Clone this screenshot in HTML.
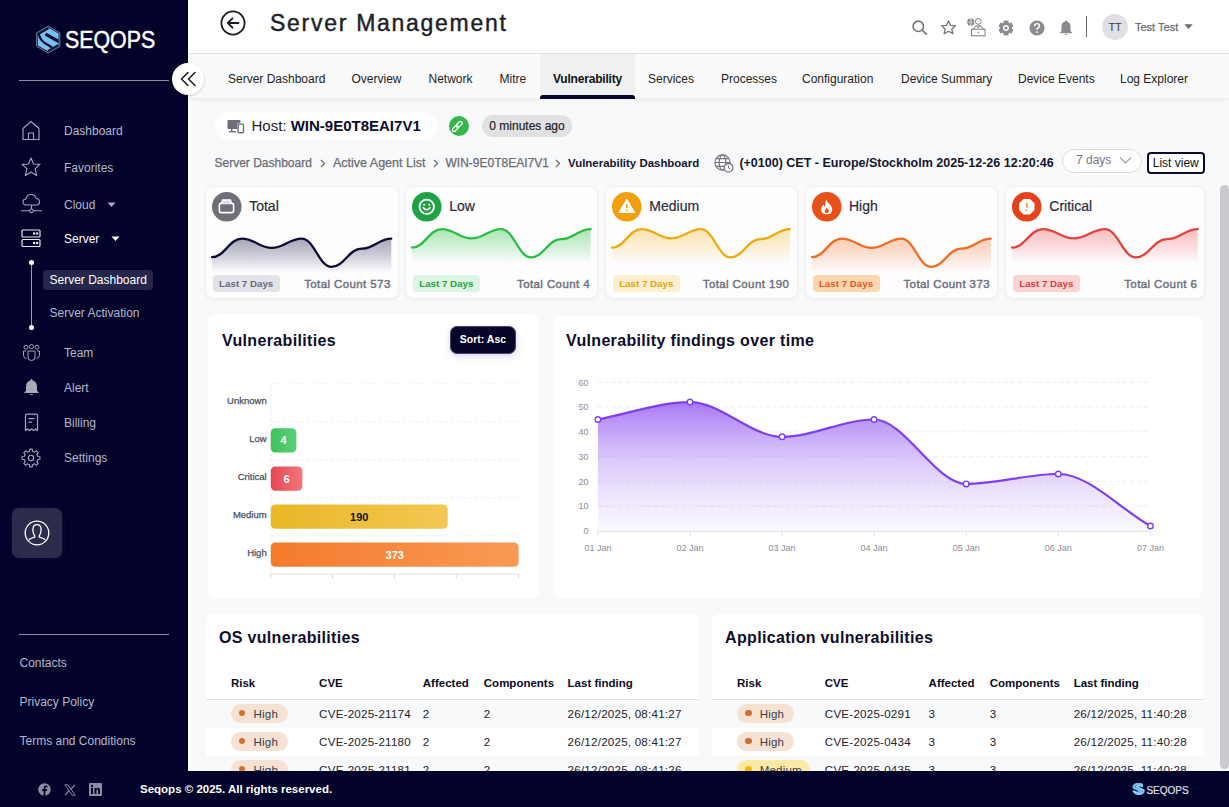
<!DOCTYPE html>
<html><head><meta charset="utf-8">
<style>
*{box-sizing:border-box;margin:0;padding:0}
html,body{width:1229px;height:807px;overflow:hidden;background:#f8f9fb;font-family:"Liberation Sans",sans-serif;}
.abs{position:absolute}
#sb{position:absolute;left:0;top:0;width:188px;height:807px;background:#02022a}
.nav{position:absolute;left:64px;font-size:12px;color:#b4b8cc;line-height:14px;white-space:nowrap}
.ico{position:absolute}
#hdr{position:absolute;left:188px;top:0;width:1041px;height:54px;background:#fff;border-bottom:1px solid #dedfe3}
#tabs{position:absolute;left:188px;top:54px;width:1041px;height:44px;background:#fafafb;box-shadow:0 2px 4px rgba(0,0,0,0.06)}
.tab{position:absolute;top:0;height:44px;line-height:50px;font-size:12px;color:#222;white-space:nowrap}
#foot{position:absolute;left:0;top:771px;width:1229px;height:36px;background:#02022a}
.card{position:absolute;top:185.5px;height:113.8px;background:#fdfdfe;border-radius:8px;border:1px solid #eef0f3;box-shadow:0 1px 3px rgba(0,0,0,0.05)}
.panel{position:absolute;background:#fff;border-radius:7px}
</style></head><body>

<!-- main content area -->
<div class="abs" style="left:188px;top:98px;width:1041px;height:673px;background:#f8f9fb"></div>

<!-- SIDEBAR -->

<div id="sb">
  <!-- logo -->
  <svg class="ico" style="left:34px;top:25px" width="29" height="30" viewBox="34 25 29 30">
    <defs><clipPath id="hx"><polygon points="48.2,27.6 58.6,33.6 58.6,45.6 48.2,51.6 37.8,45.6 37.8,33.6"/></clipPath></defs>
    <polygon points="48.2,26.2 59.8,32.9 59.8,46.3 48.2,53 36.6,46.3 36.6,32.9" fill="#0a0a30" stroke="#8a8fa8" stroke-width="0.9"/>
    <g clip-path="url(#hx)">
      <rect x="34" y="25" width="29" height="30" fill="#78c0f2"/>
      <path d="M37.8,33.6 L48.2,27.6" stroke="#0a0a30" stroke-width="3.4"/>
      <path d="M38.5,33 Q39.5,39 44,42.5 L52,47.5" fill="none" stroke="#0a0a30" stroke-width="2.2"/>
      <path d="M45.5,34.2 L60,42.2" fill="none" stroke="#0a0a30" stroke-width="3.2"/>
      <path d="M48.2,51.6 L58.6,45.6" stroke="#0a0a30" stroke-width="3.4"/>
    </g>
  </svg>
  <div class="abs" style="left:65px;top:27px;font-size:24px;line-height:26px;color:#fff;transform:scaleX(0.89);transform-origin:left;-webkit-text-stroke:0.5px #fff">SEQOPS</div>
  <div class="abs" style="left:19px;top:80px;width:150px;height:1px;background:#8c8ea6"></div>
  <!-- collapse button -->

  <!-- nav icons -->
  <svg class="ico" style="left:21px;top:120px" width="20" height="21" viewBox="0 0 20 21" fill="none" stroke="#a2a5b8" stroke-width="1.15" stroke-linejoin="round">
    <path d="M2,8.5 L10,1.5 L18,8.5 L18,19.5 L2,19.5 Z"/><path d="M7.5,19.5 L7.5,13 L12.5,13 L12.5,19.5"/>
  </svg>
  <div class="nav" style="top:124px">Dashboard</div>

  <svg class="ico" style="left:21px;top:157px" width="20" height="20" viewBox="0 0 20 20" fill="none" stroke="#a2a5b8" stroke-width="1.15" stroke-linejoin="round">
    <path d="M10,1 L12.6,7 L19,7.4 L14.1,11.6 L15.6,18.5 L10,14.9 L4.4,18.5 L5.9,11.6 L1,7.4 L7.4,7 Z"/>
  </svg>
  <div class="nav" style="top:161px">Favorites</div>

  <svg class="ico" style="left:20px;top:193px" width="23" height="21" viewBox="0 0 23 21" fill="none" stroke="#a2a5b8" stroke-width="1.1">
    <path d="M6.5,12 Q3,12 3,8.8 Q3,6 6,6 Q6.5,1.5 11,1.5 Q15.5,1.5 16.2,5.5 Q19.5,5.5 19.5,8.8 Q19.5,12 16.5,12 Z"/>
    <path d="M11.5,12 L11.5,16"/><circle cx="11.5" cy="17.8" r="1.8"/><path d="M1,17.8 L9.7,17.8 M13.3,17.8 L22,17.8"/>
  </svg>
  <div class="nav" style="top:198px">Cloud</div>
  <svg class="ico" style="left:107px;top:202px" width="9" height="6" viewBox="0 0 9 6"><path d="M0.5,0.5 L8.5,0.5 L4.5,5 Z" fill="#a9adc2"/></svg>

  <svg class="ico" style="left:21px;top:229px" width="20" height="19" viewBox="0 0 20 19" fill="none" stroke="#e8e9f0" stroke-width="1.2">
    <rect x="1" y="1" width="18" height="7" rx="1"/><rect x="1" y="10.5" width="18" height="7" rx="1"/>
    <rect x="12" y="3.4" width="2.2" height="2.2" fill="#e8e9f0" stroke="none"/><rect x="15" y="3.4" width="2.2" height="2.2" fill="#e8e9f0" stroke="none"/>
    <rect x="12" y="12.9" width="2.2" height="2.2" fill="#e8e9f0" stroke="none"/><rect x="15" y="12.9" width="2.2" height="2.2" fill="#e8e9f0" stroke="none"/>
  </svg>
  <div class="nav" style="top:232px;color:#fff">Server</div>
  <svg class="ico" style="left:111px;top:236px" width="9" height="6" viewBox="0 0 9 6"><path d="M0.5,0.5 L8.5,0.5 L4.5,5 Z" fill="#fff"/></svg>

  <!-- sub menu -->
  <div class="abs" style="left:30.5px;top:263px;width:1.3px;height:64px;background:#9a9cb0"></div>
  <div class="abs" style="left:28.5px;top:260px;width:5px;height:5px;border-radius:50%;background:#fff"></div>
  <div class="abs" style="left:28.5px;top:324.5px;width:5px;height:5px;border-radius:50%;background:#fff"></div>
  <div class="abs" style="left:43px;top:269.5px;width:110px;height:20px;border-radius:4px;background:#24264a"></div>
  <div class="nav" style="left:49.5px;top:273px;color:#fff">Server Dashboard</div>
  <div class="nav" style="left:49.5px;top:306px">Server Activation</div>

  <svg class="ico" style="left:22px;top:344px" width="19" height="18" viewBox="0 0 19 18" fill="none" stroke="#a2a5b8" stroke-width="1">
    <circle cx="4" cy="3.2" r="2"/><circle cx="9.5" cy="2.6" r="2.1"/><circle cx="15" cy="3.2" r="2"/>
    <path d="M6,7 L13,7 L13,13 Q13,16.5 9.5,16.5 Q6,16.5 6,13 Z"/>
    <path d="M4,7 L1.5,7 L1.5,11.5 Q1.5,14 4.5,14.5"/><path d="M15,7 L17.5,7 L17.5,11.5 Q17.5,14 14.5,14.5"/>
  </svg>
  <div class="nav" style="top:346px">Team</div>

  <svg class="ico" style="left:23px;top:378px" width="17" height="18" viewBox="0 0 17 18">
    <path d="M8.5,1 Q9.5,1 9.7,2.5 Q14,3.5 14,9 L14,12.5 L16,15 L1,15 L3,12.5 L3,9 Q3,3.5 7.3,2.5 Q7.5,1 8.5,1 Z" fill="#a8aab6"/>
    <path d="M6.5,16 Q8.5,18 10.5,16 Z" fill="#a8aab6"/>
  </svg>
  <div class="nav" style="top:381px">Alert</div>

  <svg class="ico" style="left:24px;top:413px" width="15" height="19" viewBox="0 0 15 19" fill="none" stroke="#a2a5b8" stroke-width="1.25">
    <path d="M1.5,17.5 L1.5,2.5 Q1.5,1 3,1 L12,1 Q13.5,1 13.5,2.5 L13.5,17.5 L11.5,16 L9.5,17.5 L7.5,16 L5.5,17.5 L3.5,16 Z" stroke-linejoin="round"/>
    <path d="M4.5,5.5 L10.5,5.5 M4.5,9 L8,9"/>
  </svg>
  <div class="nav" style="top:416px">Billing</div>

  <svg class="ico" style="left:21px;top:448px" width="20" height="20" viewBox="0 0 20 20" fill="none" stroke="#a2a5b8" stroke-width="1.1" stroke-linejoin="round">
    <path d="M16.73,8.49 L18.91,8.73 L18.91,11.27 L16.73,11.51 L15.83,13.70 L17.20,15.40 L15.40,17.20 L13.70,15.83 L11.51,16.73 L11.27,18.91 L8.73,18.91 L8.49,16.73 L6.30,15.83 L4.60,17.20 L2.80,15.40 L4.17,13.70 L3.27,11.51 L1.09,11.27 L1.09,8.73 L3.27,8.49 L4.17,6.30 L2.80,4.60 L4.60,2.80 L6.30,4.17 L8.49,3.27 L8.73,1.09 L11.27,1.09 L11.51,3.27 L13.70,4.17 L15.40,2.80 L17.20,4.60 L15.83,6.30 Z"/>
    <circle cx="10" cy="10" r="2.7"/>
  </svg>
  <div class="nav" style="top:451px">Settings</div>

  <!-- avatar -->
  <div class="abs" style="left:12px;top:508px;width:50px;height:50px;border-radius:7px;background:#2b2c4b;box-shadow:0 0 6px rgba(60,50,110,0.3)"></div>
  <svg class="ico" style="left:24px;top:520px" width="26" height="26" viewBox="0 0 26 26" fill="none" stroke="#fff" stroke-width="1.3">
    <circle cx="13" cy="13" r="11.8"/>
    <path d="M4.8,19.6 Q7,18.3 10.6,17.2 Q11,16.6 10.6,15.5 Q8.8,13 8.9,9.4 Q9.1,4.6 13,4.6 Q16.9,4.6 17.1,9.4 Q17.2,13 15.4,15.5 Q15,16.6 15.4,17.2 Q19,18.3 21.2,19.6"/>
  </svg>

  <div class="abs" style="left:19px;top:634px;width:150px;height:1px;background:#8c8ea6"></div>
  <div class="nav" style="left:19.5px;top:656px">Contacts</div>
  <div class="nav" style="left:19.5px;top:695px">Privacy Policy</div>
  <div class="nav" style="left:19.5px;top:734px">Terms and Conditions</div>
</div>



<div class="abs" style="left:188px;top:98px;width:5px;height:673px;background:linear-gradient(to right,#ffffff 40%,#f8f9fb)"></div>
<!-- HOST ROW -->
<div class="abs" style="left:214.5px;top:111.5px;width:222px;height:28.5px;border-radius:15px;background:#fff"></div>
<svg class="ico" style="left:227px;top:119px" width="18" height="15" viewBox="0 0 18 15">
  <rect x="0.5" y="1" width="13" height="9" rx="1" fill="#6e6e78"/>
  <rect x="4" y="10" width="1.5" height="2.2" fill="#6e6e78"/><rect x="2" y="12" width="7" height="1.4" fill="#6e6e78"/>
  <rect x="10.3" y="4.3" width="7" height="10.2" rx="1.3" fill="#fff"/>
  <rect x="11.1" y="5.1" width="5.4" height="8.6" rx="1" fill="none" stroke="#6e6e78" stroke-width="1.4"/>
</svg>
<div class="abs" style="left:251.5px;top:117px;font-size:15px;line-height:17px;color:#1d1d33;white-space:nowrap">Host: <b style="color:#0b0b2c">WIN-9E0T8EAI7V1</b></div>
<div class="abs" style="left:449px;top:115.5px;width:20px;height:20px;border-radius:50%;background:#33b84a"></div>
<svg class="ico" style="left:452px;top:118.5px" width="14" height="14" viewBox="0 0 14 14" fill="none" stroke="#fff" stroke-width="1.3">
  <rect x="2.6" y="-1.7" width="7" height="3.4" rx="1.7" transform="translate(3.2,9.6) rotate(-45) translate(-6.1,0)"/>
  <rect x="2.6" y="-1.7" width="7" height="3.4" rx="1.7" transform="translate(7.2,5.4) rotate(-45) translate(-6.1,0)"/>
</svg>
<div class="abs" style="left:482px;top:115px;width:90px;height:22px;border-radius:11px;background:#e1e1e4;font-size:12px;line-height:22px;color:#222;-webkit-text-stroke:0.2px #222;text-align:center;white-space:nowrap">0 minutes ago</div>

<!-- BREADCRUMB -->
<div class="abs" style="left:214.5px;top:156px;font-size:12px;line-height:15px;color:#6b6b73;-webkit-text-stroke:0.25px #6b6b73;white-space:nowrap">Server Dashboard</div>
<svg class="ico" style="left:319.5px;top:159px" width="6" height="9" viewBox="0 0 6 9"><path d="M1,1 L4.5,4.5 L1,8" fill="none" stroke="#6b6b73" stroke-width="1.2"/></svg>
<div class="abs" style="left:333px;top:156px;font-size:12.5px;line-height:15px;color:#6b6b73;-webkit-text-stroke:0.25px #6b6b73;white-space:nowrap">Active Agent List</div>
<svg class="ico" style="left:432.5px;top:159px" width="6" height="9" viewBox="0 0 6 9"><path d="M1,1 L4.5,4.5 L1,8" fill="none" stroke="#6b6b73" stroke-width="1.2"/></svg>
<div class="abs" style="left:445.5px;top:156px;font-size:12px;line-height:15px;color:#6b6b73;-webkit-text-stroke:0.25px #6b6b73;white-space:nowrap">WIN-9E0T8EAI7V1</div>
<svg class="ico" style="left:555px;top:159px" width="6" height="9" viewBox="0 0 6 9"><path d="M1,1 L4.5,4.5 L1,8" fill="none" stroke="#6b6b73" stroke-width="1.2"/></svg>
<div class="abs" style="left:568px;top:156px;font-size:11.45px;line-height:15px;font-weight:bold;color:#15152e;white-space:nowrap">Vulnerability Dashboard</div>

<svg class="ico" style="left:714px;top:154px" width="20" height="19" viewBox="0 0 20 19" fill="none" stroke="#75757d" stroke-width="1.2">
  <circle cx="8.5" cy="8.5" r="7.6"/><ellipse cx="8.5" cy="8.5" rx="3.3" ry="7.6"/><path d="M1,8.5 L16,8.5 M2.2,4.6 L14.8,4.6 M2.2,12.4 L11,12.4"/>
  <circle cx="14.5" cy="13.8" r="4.3" fill="#f8f9fb" stroke-width="1.3"/><path d="M14.5,11.6 L14.5,14 L16,14.8" stroke-width="1"/>
</svg>
<div class="abs" style="left:739.4px;top:155px;font-size:12.5px;line-height:16px;font-weight:bold;color:#15152e;white-space:nowrap">(+0100) CET - Europe/Stockholm 2025-12-26 12:20:46</div>
<div class="abs" style="left:1061.5px;top:148.5px;width:80px;height:24.5px;border-radius:13px;background:#fff;border:1px solid #dcdce0"></div>
<div class="abs" style="left:1076px;top:153px;font-size:12px;line-height:15px;color:#77777f;white-space:nowrap">7 days</div>
<svg class="ico" style="left:1119px;top:156px" width="13" height="9" viewBox="0 0 13 9"><path d="M1,1.5 L6.5,7 L12,1.5" fill="none" stroke="#a8a8ae" stroke-width="1.3"/></svg>
<div class="abs" style="left:1147px;top:152px;width:57.5px;height:21.5px;border-radius:4px;border:2px solid #0b0b30;background:#fff;font-size:12px;line-height:18px;color:#111;text-align:center;white-space:nowrap">List view</div>

<!-- CARDS -->
<div class="card" style="left:204.7px;width:194.3px"></div>
<svg class="ico" style="left:212.2px;top:192.3px" width="29.5" height="29.5" viewBox="0 0 29.5 29.5"><circle cx="14.75" cy="14.75" r="14.75" fill="#6e6f79"/><rect x="7.5" y="11.5" width="14" height="9" rx="1.5" fill="none" stroke="#fff" stroke-width="1.8"/><path d="M9.5,11.5 L10.5,8 L18.5,8 L19.5,11.5" fill="#d9d9de" stroke="#fff" stroke-width="1.4"/><rect x="8.5" y="12.5" width="12" height="7" fill="#6e6f79"/></svg>
<div class="abs" style="left:249.2px;top:198px;font-size:14px;line-height:17px;color:#2b2b3b;-webkit-text-stroke:0.2px #2b2b3b;white-space:nowrap">Total</div>
<svg class="ico" style="left:212.1px;top:215px;overflow:visible" width="179.3" height="65" viewBox="0 0 179.3 65"><defs><linearGradient id="g0" gradientUnits="userSpaceOnUse" x1="0" y1="23.6" x2="0" y2="57.9"><stop offset="0" stop-color="#3a3b60" stop-opacity="0.45"/><stop offset="0.55" stop-color="#3a3b60" stop-opacity="0.22"/><stop offset="1" stop-color="#3a3b60" stop-opacity="0"/></linearGradient></defs><path d="M0.0,42.1 C12.6,42.1 17.3,23.6 29.9,23.6 C42.4,23.6 47.2,32.9 59.8,32.9 C72.3,32.9 77.1,23.6 89.7,23.6 C102.2,23.6 107.0,51.9 119.5,51.9 C132.1,51.9 136.9,33.7 149.4,33.7 C162.0,33.7 166.7,23.6 179.3,23.6 L179.3,65 L0,65 Z" fill="url(#g0)"/><path d="M0.0,42.1 C12.6,42.1 17.3,23.6 29.9,23.6 C42.4,23.6 47.2,32.9 59.8,32.9 C72.3,32.9 77.1,23.6 89.7,23.6 C102.2,23.6 107.0,51.9 119.5,51.9 C132.1,51.9 136.9,33.7 149.4,33.7 C162.0,33.7 166.7,23.6 179.3,23.6" fill="none" stroke="#0b0b33" stroke-width="2.3" stroke-linecap="round"/></svg>
<div class="abs" style="left:212.7px;top:275px;width:67px;height:16.6px;border-radius:4px;background:#e2e3e8;color:#656a78;font-size:9.75px;font-weight:bold;line-height:17px;text-align:center;white-space:nowrap">Last 7 Days</div>
<div class="abs" style="left:204.7px;width:186.0px;top:277.3px;text-align:right;font-size:11.5px;line-height:14px;letter-spacing:0.4px;color:#6a6d7d;-webkit-text-stroke:0.4px #6a6d7d;white-space:nowrap">Total Count 573</div>
<div class="card" style="left:404.8px;width:193.5px"></div>
<svg class="ico" style="left:412.3px;top:192.3px" width="29.5" height="29.5" viewBox="0 0 29.5 29.5"><circle cx="14.75" cy="14.75" r="14.75" fill="#1fa244"/><circle cx="14.75" cy="14.75" r="7.2" fill="none" stroke="#fff" stroke-width="1.8"/><circle cx="12.2" cy="12.8" r="1.05" fill="#fff"/><circle cx="17.3" cy="12.8" r="1.05" fill="#fff"/><path d="M11.4,15.8 Q14.75,19.6 18.1,15.8" fill="none" stroke="#fff" stroke-width="1.6" stroke-linecap="round"/></svg>
<div class="abs" style="left:449.3px;top:198px;font-size:14px;line-height:17px;color:#2b2b3b;-webkit-text-stroke:0.2px #2b2b3b;white-space:nowrap">Low</div>
<svg class="ico" style="left:412.2px;top:215px;overflow:visible" width="178.5" height="65" viewBox="0 0 178.5 65"><defs><linearGradient id="g1" gradientUnits="userSpaceOnUse" x1="0" y1="14.1" x2="0" y2="48.4"><stop offset="0" stop-color="#45c95d" stop-opacity="0.45"/><stop offset="0.55" stop-color="#45c95d" stop-opacity="0.22"/><stop offset="1" stop-color="#45c95d" stop-opacity="0"/></linearGradient></defs><path d="M0.0,32.6 C12.5,32.6 17.3,14.1 29.8,14.1 C42.2,14.1 47.0,23.4 59.5,23.4 C72.0,23.4 76.8,14.1 89.2,14.1 C101.7,14.1 106.5,42.4 119.0,42.4 C131.5,42.4 136.3,24.2 148.7,24.2 C161.2,24.2 166.0,14.1 178.5,14.1 L178.5,65 L0,65 Z" fill="url(#g1)"/><path d="M0.0,32.6 C12.5,32.6 17.3,14.1 29.8,14.1 C42.2,14.1 47.0,23.4 59.5,23.4 C72.0,23.4 76.8,14.1 89.2,14.1 C101.7,14.1 106.5,42.4 119.0,42.4 C131.5,42.4 136.3,24.2 148.7,24.2 C161.2,24.2 166.0,14.1 178.5,14.1" fill="none" stroke="#2dbd45" stroke-width="2.3" stroke-linecap="round"/></svg>
<div class="abs" style="left:412.8px;top:275px;width:67px;height:16.6px;border-radius:4px;background:#dbf5e2;color:#22a346;font-size:9.75px;font-weight:bold;line-height:17px;text-align:center;white-space:nowrap">Last 7 Days</div>
<div class="abs" style="left:404.8px;width:185.2px;top:277.3px;text-align:right;font-size:11.5px;line-height:14px;letter-spacing:0.4px;color:#6a6d7d;-webkit-text-stroke:0.4px #6a6d7d;white-space:nowrap">Total Count 4</div>
<div class="card" style="left:604.8px;width:192.8px"></div>
<svg class="ico" style="left:612.3px;top:192.3px" width="29.5" height="29.5" viewBox="0 0 29.5 29.5"><circle cx="14.75" cy="14.75" r="14.75" fill="#f1a00c"/><path d="M14.75,7.5 L22.5,20.5 L7,20.5 Z" fill="#fff" stroke="#fff" stroke-width="1.2" stroke-linejoin="round"/><path d="M14.75,12 L14.75,16.2" stroke="#f1a00c" stroke-width="1.6"/><circle cx="14.75" cy="18.2" r="0.85" fill="#f1a00c"/></svg>
<div class="abs" style="left:649.3px;top:198px;font-size:14px;line-height:17px;color:#2b2b3b;-webkit-text-stroke:0.2px #2b2b3b;white-space:nowrap">Medium</div>
<svg class="ico" style="left:612.2px;top:215px;overflow:visible" width="177.8" height="65" viewBox="0 0 177.8 65"><defs><linearGradient id="g2" gradientUnits="userSpaceOnUse" x1="0" y1="14.1" x2="0" y2="48.4"><stop offset="0" stop-color="#f4c04a" stop-opacity="0.45"/><stop offset="0.55" stop-color="#f4c04a" stop-opacity="0.22"/><stop offset="1" stop-color="#f4c04a" stop-opacity="0"/></linearGradient></defs><path d="M0.0,32.6 C12.4,32.6 17.2,14.1 29.6,14.1 C42.1,14.1 46.8,23.4 59.3,23.4 C71.7,23.4 76.5,14.1 88.9,14.1 C101.3,14.1 106.1,42.4 118.5,42.4 C131.0,42.4 135.7,24.2 148.2,24.2 C160.6,24.2 165.4,14.1 177.8,14.1 L177.8,65 L0,65 Z" fill="url(#g2)"/><path d="M0.0,32.6 C12.4,32.6 17.2,14.1 29.6,14.1 C42.1,14.1 46.8,23.4 59.3,23.4 C71.7,23.4 76.5,14.1 88.9,14.1 C101.3,14.1 106.1,42.4 118.5,42.4 C131.0,42.4 135.7,24.2 148.2,24.2 C160.6,24.2 165.4,14.1 177.8,14.1" fill="none" stroke="#efaa0c" stroke-width="2.3" stroke-linecap="round"/></svg>
<div class="abs" style="left:612.8px;top:275px;width:67px;height:16.6px;border-radius:4px;background:#fcefd0;color:#e8a30a;font-size:9.75px;font-weight:bold;line-height:17px;text-align:center;white-space:nowrap">Last 7 Days</div>
<div class="abs" style="left:604.8px;width:184.5px;top:277.3px;text-align:right;font-size:11.5px;line-height:14px;letter-spacing:0.4px;color:#6a6d7d;-webkit-text-stroke:0.4px #6a6d7d;white-space:nowrap">Total Count 190</div>
<div class="card" style="left:804.5px;width:193.8px"></div>
<svg class="ico" style="left:812.0px;top:192.3px" width="29.5" height="29.5" viewBox="0 0 29.5 29.5"><circle cx="14.75" cy="14.75" r="14.75" fill="#e8501a"/><path d="M14.2,7.3 Q15,10 17,11.5 Q20.3,14 20.3,17.2 Q20.3,22.3 14.75,22.3 Q9.2,22.3 9.2,17.5 Q9.2,14.5 11.5,12.3 Q12,14.5 13.3,14.7 Q12.8,10.5 14.2,7.3 Z" fill="#fff"/><path d="M14.6,15.5 Q15.2,16.8 16.2,17.6 Q17.3,18.6 16.8,19.8 Q16.2,21 14.75,21 Q13.1,21 12.7,19.7 Q12.3,18.3 13.6,17.2 Q14.4,16.5 14.6,15.5 Z" fill="#e8501a"/></svg>
<div class="abs" style="left:849.0px;top:198px;font-size:14px;line-height:17px;color:#2b2b3b;-webkit-text-stroke:0.2px #2b2b3b;white-space:nowrap">High</div>
<svg class="ico" style="left:811.9px;top:215px;overflow:visible" width="178.8" height="65" viewBox="0 0 178.8 65"><defs><linearGradient id="g3" gradientUnits="userSpaceOnUse" x1="0" y1="23.6" x2="0" y2="57.9"><stop offset="0" stop-color="#f5915a" stop-opacity="0.45"/><stop offset="0.55" stop-color="#f5915a" stop-opacity="0.22"/><stop offset="1" stop-color="#f5915a" stop-opacity="0"/></linearGradient></defs><path d="M0.0,42.1 C12.5,42.1 17.3,23.6 29.8,23.6 C42.3,23.6 47.1,32.9 59.6,32.9 C72.1,32.9 76.9,23.6 89.4,23.6 C101.9,23.6 106.7,51.9 119.2,51.9 C131.7,51.9 136.5,33.7 149.0,33.7 C161.5,33.7 166.3,23.6 178.8,23.6 L178.8,65 L0,65 Z" fill="url(#g3)"/><path d="M0.0,42.1 C12.5,42.1 17.3,23.6 29.8,23.6 C42.3,23.6 47.1,32.9 59.6,32.9 C72.1,32.9 76.9,23.6 89.4,23.6 C101.9,23.6 106.7,51.9 119.2,51.9 C131.7,51.9 136.5,33.7 149.0,33.7 C161.5,33.7 166.3,23.6 178.8,23.6" fill="none" stroke="#f26b22" stroke-width="2.3" stroke-linecap="round"/></svg>
<div class="abs" style="left:812.5px;top:275px;width:67px;height:16.6px;border-radius:4px;background:#fdd6b0;color:#e8561a;font-size:9.75px;font-weight:bold;line-height:17px;text-align:center;white-space:nowrap">Last 7 Days</div>
<div class="abs" style="left:804.5px;width:185.5px;top:277.3px;text-align:right;font-size:11.5px;line-height:14px;letter-spacing:0.4px;color:#6a6d7d;-webkit-text-stroke:0.4px #6a6d7d;white-space:nowrap">Total Count 373</div>
<div class="card" style="left:1004.8px;width:200.7px"></div>
<svg class="ico" style="left:1012.3px;top:192.3px" width="29.5" height="29.5" viewBox="0 0 29.5 29.5"><circle cx="14.75" cy="14.75" r="14.75" fill="#e5421b"/><path d="M11.5,7 L18,7 L22.5,11.5 L22.5,18 L18,22.5 L11.5,22.5 L7,18 L7,11.5 Z" fill="#fff"/><rect x="14" y="10.8" width="1.5" height="5.2" fill="#f0935a"/><rect x="14" y="17.3" width="1.5" height="1.6" fill="#f0935a"/></svg>
<div class="abs" style="left:1049.3px;top:198px;font-size:14px;line-height:17px;color:#2b2b3b;-webkit-text-stroke:0.2px #2b2b3b;white-space:nowrap">Critical</div>
<svg class="ico" style="left:1012.2px;top:215px;overflow:visible" width="185.7" height="65" viewBox="0 0 185.7 65"><defs><linearGradient id="g4" gradientUnits="userSpaceOnUse" x1="0" y1="14.1" x2="0" y2="48.4"><stop offset="0" stop-color="#f07070" stop-opacity="0.45"/><stop offset="0.55" stop-color="#f07070" stop-opacity="0.22"/><stop offset="1" stop-color="#f07070" stop-opacity="0"/></linearGradient></defs><path d="M0.0,32.6 C13.0,32.6 18.0,14.1 30.9,14.1 C43.9,14.1 48.9,23.4 61.9,23.4 C74.9,23.4 79.9,14.1 92.9,14.1 C105.8,14.1 110.8,42.4 123.8,42.4 C136.8,42.4 141.8,24.2 154.8,24.2 C167.7,24.2 172.7,14.1 185.7,14.1 L185.7,65 L0,65 Z" fill="url(#g4)"/><path d="M0.0,32.6 C13.0,32.6 18.0,14.1 30.9,14.1 C43.9,14.1 48.9,23.4 61.9,23.4 C74.9,23.4 79.9,14.1 92.9,14.1 C105.8,14.1 110.8,42.4 123.8,42.4 C136.8,42.4 141.8,24.2 154.8,24.2 C167.7,24.2 172.7,14.1 185.7,14.1" fill="none" stroke="#e6403e" stroke-width="2.3" stroke-linecap="round"/></svg>
<div class="abs" style="left:1012.8px;top:275px;width:67px;height:16.6px;border-radius:4px;background:#fad3d3;color:#de3b3b;font-size:9.75px;font-weight:bold;line-height:17px;text-align:center;white-space:nowrap">Last 7 Days</div>
<div class="abs" style="left:1004.8px;width:192.4px;top:277.3px;text-align:right;font-size:11.5px;line-height:14px;letter-spacing:0.4px;color:#6a6d7d;-webkit-text-stroke:0.4px #6a6d7d;white-space:nowrap">Total Count 6</div>
<!-- /CARDS -->
<!-- PANELS -->
<div class="panel" style="left:208.3px;top:315.3px;width:331px;height:282.5px"></div>
<div class="abs" style="left:222px;top:332px;font-size:16px;line-height:18px;font-weight:bold;color:#0d0d2b;letter-spacing:0.35px;white-space:nowrap">Vulnerabilities</div>
<div class="abs" style="left:449.6px;top:326.3px;width:66.8px;height:27.7px;border-radius:7px;background:#06062a;border:1.5px solid #48486a;box-shadow:0 2px 6px rgba(110,90,200,0.28);color:#fff;font-size:10.5px;font-weight:bold;line-height:25px;text-align:center;white-space:nowrap">Sort: Asc</div>
<svg class="ico" style="left:208px;top:370px" width="330" height="220" viewBox="208 370 330 220"><defs><linearGradient id="bl" x1="0" x2="1"><stop offset="0" stop-color="#3cc25c"/><stop offset="1" stop-color="#5ccf78"/></linearGradient><linearGradient id="bc" x1="0" x2="1"><stop offset="0" stop-color="#e84552"/><stop offset="1" stop-color="#f27779"/></linearGradient><linearGradient id="bm" x1="0" x2="1"><stop offset="0" stop-color="#eab726"/><stop offset="1" stop-color="#f2c854"/></linearGradient><linearGradient id="bh" x1="0" x2="1"><stop offset="0" stop-color="#f57a2c"/><stop offset="1" stop-color="#f89a55"/></linearGradient></defs><line x1="271" y1="383.8" x2="519" y2="383.8" stroke="#eeeff3" stroke-width="1" stroke-dasharray="3,3"/><line x1="271" y1="421.8" x2="519" y2="421.8" stroke="#eeeff3" stroke-width="1" stroke-dasharray="3,3"/><line x1="271" y1="459.8" x2="519" y2="459.8" stroke="#eeeff3" stroke-width="1" stroke-dasharray="3,3"/><line x1="271" y1="497.8" x2="519" y2="497.8" stroke="#eeeff3" stroke-width="1" stroke-dasharray="3,3"/><line x1="271" y1="535.8" x2="519" y2="535.8" stroke="#eeeff3" stroke-width="1" stroke-dasharray="3,3"/><line x1="270.8" y1="383.5" x2="270.8" y2="574" stroke="#e6e7ec" stroke-width="1" stroke-dasharray="3,2"/><line x1="270.5" y1="574" x2="519" y2="574" stroke="#e0e1e6" stroke-width="1"/><line x1="270.8" y1="574" x2="270.8" y2="578.5" stroke="#d8d9de" stroke-width="1"/><line x1="332.5" y1="574" x2="332.5" y2="578.5" stroke="#d8d9de" stroke-width="1"/><line x1="394.4" y1="574" x2="394.4" y2="578.5" stroke="#d8d9de" stroke-width="1"/><line x1="456.2" y1="574" x2="456.2" y2="578.5" stroke="#d8d9de" stroke-width="1"/><line x1="518.5" y1="574" x2="518.5" y2="578.5" stroke="#d8d9de" stroke-width="1"/><rect x="270.8" y="428.2" width="25.6" height="24.3" rx="4.5" fill="url(#bl)"/><text x="283.6" y="444.4" text-anchor="middle" font-family="Liberation Sans" font-weight="bold" font-size="11" fill="#fff">4</text><rect x="270.8" y="466.4" width="31.6" height="24.3" rx="4.5" fill="url(#bc)"/><text x="286.6" y="482.6" text-anchor="middle" font-family="Liberation Sans" font-weight="bold" font-size="11" fill="#fff">6</text><rect x="270.8" y="504.5" width="176.9" height="24.3" rx="4.5" fill="url(#bm)"/><text x="359.2" y="520.7" text-anchor="middle" font-family="Liberation Sans" font-weight="bold" font-size="11" fill="#111">190</text><rect x="270.8" y="542.5" width="247.8" height="24.3" rx="4.5" fill="url(#bh)"/><text x="394.7" y="558.7" text-anchor="middle" font-family="Liberation Sans" font-weight="bold" font-size="11" fill="#fff">373</text><text x="266.7" y="404.0" text-anchor="end" font-family="Liberation Sans" font-size="9.5" fill="#4b4f62" stroke="#4b4f62" stroke-width="0.25">Unknown</text><text x="266.7" y="442.0" text-anchor="end" font-family="Liberation Sans" font-size="9.5" fill="#4b4f62" stroke="#4b4f62" stroke-width="0.25">Low</text><text x="266.7" y="480.0" text-anchor="end" font-family="Liberation Sans" font-size="9.5" fill="#4b4f62" stroke="#4b4f62" stroke-width="0.25">Critical</text><text x="266.7" y="518.2" text-anchor="end" font-family="Liberation Sans" font-size="9.5" fill="#4b4f62" stroke="#4b4f62" stroke-width="0.25">Medium</text><text x="266.7" y="556.2" text-anchor="end" font-family="Liberation Sans" font-size="9.5" fill="#4b4f62" stroke="#4b4f62" stroke-width="0.25">High</text></svg>
<div class="panel" style="left:553.3px;top:315.6px;width:648.4px;height:282px"></div>
<div class="abs" style="left:566px;top:332px;font-size:16px;line-height:18px;font-weight:bold;color:#0d0d2b;letter-spacing:0.33px;white-space:nowrap">Vulnerability findings over time</div>
<svg class="ico" style="left:553px;top:370px" width="648" height="200" viewBox="553 370 648 200"><defs><linearGradient id="pf" gradientUnits="userSpaceOnUse" x1="0" y1="400" x2="0" y2="531"><stop offset="0" stop-color="#8d4df2" stop-opacity="0.78"/><stop offset="0.45" stop-color="#a77af5" stop-opacity="0.42"/><stop offset="1" stop-color="#c6a9f8" stop-opacity="0.08"/></linearGradient></defs><text x="588.6" y="534.2" text-anchor="end" font-family="Liberation Sans" font-size="9" fill="#8b8d96">0</text><line x1="597.9" y1="506.2" x2="1150.4" y2="506.2" stroke="#ececf0" stroke-width="1" stroke-dasharray="4,3"/><text x="588.6" y="509.4" text-anchor="end" font-family="Liberation Sans" font-size="9" fill="#8b8d96">10</text><line x1="597.9" y1="481.4" x2="1150.4" y2="481.4" stroke="#ececf0" stroke-width="1" stroke-dasharray="4,3"/><text x="588.6" y="484.6" text-anchor="end" font-family="Liberation Sans" font-size="9" fill="#8b8d96">20</text><line x1="597.9" y1="456.7" x2="1150.4" y2="456.7" stroke="#ececf0" stroke-width="1" stroke-dasharray="4,3"/><text x="588.6" y="459.9" text-anchor="end" font-family="Liberation Sans" font-size="9" fill="#8b8d96">30</text><line x1="597.9" y1="431.9" x2="1150.4" y2="431.9" stroke="#ececf0" stroke-width="1" stroke-dasharray="4,3"/><text x="588.6" y="435.1" text-anchor="end" font-family="Liberation Sans" font-size="9" fill="#8b8d96">40</text><line x1="597.9" y1="407.1" x2="1150.4" y2="407.1" stroke="#ececf0" stroke-width="1" stroke-dasharray="4,3"/><text x="588.6" y="410.3" text-anchor="end" font-family="Liberation Sans" font-size="9" fill="#8b8d96">50</text><line x1="597.9" y1="382.3" x2="1150.4" y2="382.3" stroke="#ececf0" stroke-width="1" stroke-dasharray="4,3"/><text x="588.6" y="385.5" text-anchor="end" font-family="Liberation Sans" font-size="9" fill="#8b8d96">60</text><line x1="597.9" y1="531.5" x2="1150.4" y2="531.5" stroke="#e3e4ea" stroke-width="1"/><line x1="597.9" y1="531.5" x2="597.9" y2="536.0" stroke="#e3e4ea" stroke-width="1"/><text x="597.9" y="550.8" text-anchor="middle" font-family="Liberation Sans" font-size="9" fill="#8b8d96">01 Jan</text><line x1="690.0" y1="531.5" x2="690.0" y2="536.0" stroke="#e3e4ea" stroke-width="1"/><text x="690.0" y="550.8" text-anchor="middle" font-family="Liberation Sans" font-size="9" fill="#8b8d96">02 Jan</text><line x1="782.1" y1="531.5" x2="782.1" y2="536.0" stroke="#e3e4ea" stroke-width="1"/><text x="782.1" y="550.8" text-anchor="middle" font-family="Liberation Sans" font-size="9" fill="#8b8d96">03 Jan</text><line x1="874.1" y1="531.5" x2="874.1" y2="536.0" stroke="#e3e4ea" stroke-width="1"/><text x="874.1" y="550.8" text-anchor="middle" font-family="Liberation Sans" font-size="9" fill="#8b8d96">04 Jan</text><line x1="966.2" y1="531.5" x2="966.2" y2="536.0" stroke="#e3e4ea" stroke-width="1"/><text x="966.2" y="550.8" text-anchor="middle" font-family="Liberation Sans" font-size="9" fill="#8b8d96">05 Jan</text><line x1="1058.3" y1="531.5" x2="1058.3" y2="536.0" stroke="#e3e4ea" stroke-width="1"/><text x="1058.3" y="550.8" text-anchor="middle" font-family="Liberation Sans" font-size="9" fill="#8b8d96">06 Jan</text><line x1="1150.4" y1="531.5" x2="1150.4" y2="536.0" stroke="#e3e4ea" stroke-width="1"/><text x="1150.4" y="550.8" text-anchor="middle" font-family="Liberation Sans" font-size="9" fill="#8b8d96">07 Jan</text><path d="M597.9,419.5 C628.6,413.7 659.3,402.1 690.0,402.1 C720.7,402.1 751.4,436.8 782.1,436.8 C812.8,436.8 843.4,419.5 874.1,419.5 C904.8,419.5 935.5,483.9 966.2,483.9 C996.9,483.9 1027.6,474.0 1058.3,474.0 C1089.0,474.0 1119.7,508.7 1150.4,526.0 L1150.4,531.0 L597.9,531.0 Z" fill="url(#pf)"/><path d="M597.9,419.5 C628.6,413.7 659.3,402.1 690.0,402.1 C720.7,402.1 751.4,436.8 782.1,436.8 C812.8,436.8 843.4,419.5 874.1,419.5 C904.8,419.5 935.5,483.9 966.2,483.9 C996.9,483.9 1027.6,474.0 1058.3,474.0 C1089.0,474.0 1119.7,508.7 1150.4,526.0" fill="none" stroke="#7e3ff0" stroke-width="2.2"/><circle cx="597.9" cy="419.5" r="2.8" fill="#fff" stroke="#7e3ff0" stroke-width="1.4"/><circle cx="690.0" cy="402.1" r="2.8" fill="#fff" stroke="#7e3ff0" stroke-width="1.4"/><circle cx="782.1" cy="436.8" r="2.8" fill="#fff" stroke="#7e3ff0" stroke-width="1.4"/><circle cx="874.1" cy="419.5" r="2.8" fill="#fff" stroke="#7e3ff0" stroke-width="1.4"/><circle cx="966.2" cy="483.9" r="2.8" fill="#fff" stroke="#7e3ff0" stroke-width="1.4"/><circle cx="1058.3" cy="474.0" r="2.8" fill="#fff" stroke="#7e3ff0" stroke-width="1.4"/><circle cx="1150.4" cy="526.0" r="2.8" fill="#fff" stroke="#7e3ff0" stroke-width="1.4"/></svg>
<!-- /PANELS -->
<!-- TABLES -->
<div class="panel" style="left:205.5px;top:614.3px;width:493.5px;height:170px;border-radius:7px 7px 0 0"></div>
<div class="abs" style="left:218.9px;top:628.5px;font-size:16px;line-height:18px;font-weight:bold;color:#0d0d2b;letter-spacing:0.33px;white-space:nowrap">OS vulnerabilities</div>
<div class="abs" style="left:205.5px;top:698.5px;width:493.5px;height:1.5px;background:#e0e1e6"></div>
<div class="abs" style="left:205.5px;top:700px;width:493.5px;height:27.6px;background:#f8f9fb"></div>
<div class="abs" style="left:205.5px;top:755.6px;width:493.5px;height:27.6px;background:#f8f9fb"></div>
<div class="abs" style="left:230.9px;top:676px;font-size:11.5px;line-height:14px;font-weight:bold;color:#0b0b1e;white-space:nowrap">Risk</div>
<div class="abs" style="left:319.1px;top:676px;font-size:11.5px;line-height:14px;font-weight:bold;color:#0b0b1e;white-space:nowrap">CVE</div>
<div class="abs" style="left:422.8px;top:676px;font-size:11.5px;line-height:14px;font-weight:bold;color:#0b0b1e;white-space:nowrap">Affected</div>
<div class="abs" style="left:483.8px;top:676px;font-size:11.5px;line-height:14px;font-weight:bold;color:#0b0b1e;white-space:nowrap">Components</div>
<div class="abs" style="left:567.6px;top:676px;font-size:11.5px;line-height:14px;font-weight:bold;color:#0b0b1e;white-space:nowrap">Last finding</div>
<div class="abs" style="left:230.9px;top:704.0px;width:56.7px;height:18.8px;border-radius:9.4px;background:#f5e2d3"></div>
<div class="abs" style="left:239.2px;top:710.2px;width:6.3px;height:6.3px;border-radius:50%;background:#cf7030"></div>
<div class="abs" style="left:253.6px;top:706.9px;font-size:11.5px;line-height:14px;color:#3b3b50;letter-spacing:0.2px;white-space:nowrap">High</div>
<div class="abs" style="left:319.1px;top:707.2px;font-size:11.6px;line-height:14px;letter-spacing:0.22px;color:#23232b;white-space:nowrap">CVE-2025-21174</div>
<div class="abs" style="left:422.8px;top:707.2px;font-size:11.6px;line-height:14px;letter-spacing:0.22px;color:#23232b;white-space:nowrap">2</div>
<div class="abs" style="left:483.8px;top:707.2px;font-size:11.6px;line-height:14px;letter-spacing:0.22px;color:#23232b;white-space:nowrap">2</div>
<div class="abs" style="left:567.6px;top:707.2px;font-size:11.6px;line-height:14px;letter-spacing:0.22px;color:#23232b;white-space:nowrap">26/12/2025, 08:41:27</div>
<div class="abs" style="left:230.9px;top:731.8px;width:56.7px;height:18.8px;border-radius:9.4px;background:#f5e2d3"></div>
<div class="abs" style="left:239.2px;top:738.0px;width:6.3px;height:6.3px;border-radius:50%;background:#cf7030"></div>
<div class="abs" style="left:253.6px;top:734.7px;font-size:11.5px;line-height:14px;color:#3b3b50;letter-spacing:0.2px;white-space:nowrap">High</div>
<div class="abs" style="left:319.1px;top:735.0px;font-size:11.6px;line-height:14px;letter-spacing:0.22px;color:#23232b;white-space:nowrap">CVE-2025-21180</div>
<div class="abs" style="left:422.8px;top:735.0px;font-size:11.6px;line-height:14px;letter-spacing:0.22px;color:#23232b;white-space:nowrap">2</div>
<div class="abs" style="left:483.8px;top:735.0px;font-size:11.6px;line-height:14px;letter-spacing:0.22px;color:#23232b;white-space:nowrap">2</div>
<div class="abs" style="left:567.6px;top:735.0px;font-size:11.6px;line-height:14px;letter-spacing:0.22px;color:#23232b;white-space:nowrap">26/12/2025, 08:41:27</div>
<div class="abs" style="left:230.9px;top:759.6px;width:56.7px;height:18.8px;border-radius:9.4px;background:#f5e2d3"></div>
<div class="abs" style="left:239.2px;top:765.8px;width:6.3px;height:6.3px;border-radius:50%;background:#cf7030"></div>
<div class="abs" style="left:253.6px;top:762.5px;font-size:11.5px;line-height:14px;color:#3b3b50;letter-spacing:0.2px;white-space:nowrap">High</div>
<div class="abs" style="left:319.1px;top:762.8px;font-size:11.6px;line-height:14px;letter-spacing:0.22px;color:#23232b;white-space:nowrap">CVE-2025-21181</div>
<div class="abs" style="left:422.8px;top:762.8px;font-size:11.6px;line-height:14px;letter-spacing:0.22px;color:#23232b;white-space:nowrap">2</div>
<div class="abs" style="left:483.8px;top:762.8px;font-size:11.6px;line-height:14px;letter-spacing:0.22px;color:#23232b;white-space:nowrap">2</div>
<div class="abs" style="left:567.6px;top:762.8px;font-size:11.6px;line-height:14px;letter-spacing:0.22px;color:#23232b;white-space:nowrap">26/12/2025, 08:41:26</div>
<div class="panel" style="left:711.7px;top:614.3px;width:492.8px;height:170px;border-radius:7px 7px 0 0"></div>
<div class="abs" style="left:725.1px;top:628.5px;font-size:16px;line-height:18px;font-weight:bold;color:#0d0d2b;letter-spacing:0.33px;white-space:nowrap">Application vulnerabilities</div>
<div class="abs" style="left:711.7px;top:698.5px;width:492.8px;height:1.5px;background:#e0e1e6"></div>
<div class="abs" style="left:711.7px;top:700px;width:492.8px;height:27.6px;background:#f8f9fb"></div>
<div class="abs" style="left:711.7px;top:755.6px;width:492.8px;height:27.6px;background:#f8f9fb"></div>
<div class="abs" style="left:737px;top:676px;font-size:11.5px;line-height:14px;font-weight:bold;color:#0b0b1e;white-space:nowrap">Risk</div>
<div class="abs" style="left:824.8px;top:676px;font-size:11.5px;line-height:14px;font-weight:bold;color:#0b0b1e;white-space:nowrap">CVE</div>
<div class="abs" style="left:928.6px;top:676px;font-size:11.5px;line-height:14px;font-weight:bold;color:#0b0b1e;white-space:nowrap">Affected</div>
<div class="abs" style="left:989.7px;top:676px;font-size:11.5px;line-height:14px;font-weight:bold;color:#0b0b1e;white-space:nowrap">Components</div>
<div class="abs" style="left:1073.7px;top:676px;font-size:11.5px;line-height:14px;font-weight:bold;color:#0b0b1e;white-space:nowrap">Last finding</div>
<div class="abs" style="left:737px;top:704.0px;width:56.7px;height:18.8px;border-radius:9.4px;background:#f5e2d3"></div>
<div class="abs" style="left:745.3px;top:710.2px;width:6.3px;height:6.3px;border-radius:50%;background:#cf7030"></div>
<div class="abs" style="left:759.7px;top:706.9px;font-size:11.5px;line-height:14px;color:#3b3b50;letter-spacing:0.2px;white-space:nowrap">High</div>
<div class="abs" style="left:824.8px;top:707.2px;font-size:11.6px;line-height:14px;letter-spacing:0.22px;color:#23232b;white-space:nowrap">CVE-2025-0291</div>
<div class="abs" style="left:928.6px;top:707.2px;font-size:11.6px;line-height:14px;letter-spacing:0.22px;color:#23232b;white-space:nowrap">3</div>
<div class="abs" style="left:989.7px;top:707.2px;font-size:11.6px;line-height:14px;letter-spacing:0.22px;color:#23232b;white-space:nowrap">3</div>
<div class="abs" style="left:1073.7px;top:707.2px;font-size:11.6px;line-height:14px;letter-spacing:0.22px;color:#23232b;white-space:nowrap">26/12/2025, 11:40:28</div>
<div class="abs" style="left:737px;top:731.8px;width:56.7px;height:18.8px;border-radius:9.4px;background:#f5e2d3"></div>
<div class="abs" style="left:745.3px;top:738.0px;width:6.3px;height:6.3px;border-radius:50%;background:#cf7030"></div>
<div class="abs" style="left:759.7px;top:734.7px;font-size:11.5px;line-height:14px;color:#3b3b50;letter-spacing:0.2px;white-space:nowrap">High</div>
<div class="abs" style="left:824.8px;top:735.0px;font-size:11.6px;line-height:14px;letter-spacing:0.22px;color:#23232b;white-space:nowrap">CVE-2025-0434</div>
<div class="abs" style="left:928.6px;top:735.0px;font-size:11.6px;line-height:14px;letter-spacing:0.22px;color:#23232b;white-space:nowrap">3</div>
<div class="abs" style="left:989.7px;top:735.0px;font-size:11.6px;line-height:14px;letter-spacing:0.22px;color:#23232b;white-space:nowrap">3</div>
<div class="abs" style="left:1073.7px;top:735.0px;font-size:11.6px;line-height:14px;letter-spacing:0.22px;color:#23232b;white-space:nowrap">26/12/2025, 11:40:28</div>
<div class="abs" style="left:737px;top:759.6px;width:73px;height:18.8px;border-radius:9.4px;background:#fbeaa6"></div>
<div class="abs" style="left:745.3px;top:765.8px;width:6.3px;height:6.3px;border-radius:50%;background:#f2b705"></div>
<div class="abs" style="left:759.7px;top:762.5px;font-size:11.5px;line-height:14px;color:#3b3b50;letter-spacing:0.2px;white-space:nowrap">Medium</div>
<div class="abs" style="left:824.8px;top:762.8px;font-size:11.6px;line-height:14px;letter-spacing:0.22px;color:#23232b;white-space:nowrap">CVE-2025-0435</div>
<div class="abs" style="left:928.6px;top:762.8px;font-size:11.6px;line-height:14px;letter-spacing:0.22px;color:#23232b;white-space:nowrap">3</div>
<div class="abs" style="left:989.7px;top:762.8px;font-size:11.6px;line-height:14px;letter-spacing:0.22px;color:#23232b;white-space:nowrap">3</div>
<div class="abs" style="left:1073.7px;top:762.8px;font-size:11.6px;line-height:14px;letter-spacing:0.22px;color:#23232b;white-space:nowrap">26/12/2025, 11:40:28</div>
<div class="abs" style="left:1220px;top:185px;width:9px;height:584px;border-radius:4.5px;background:#c9cacf"></div>
<!-- /TABLES -->
<!-- HEADER -->
<div id="hdr">
  <svg class="ico" style="left:32px;top:10px" width="26" height="26" viewBox="0 0 26 26" fill="none" stroke="#1a1a22" stroke-width="1.8">
    <circle cx="13" cy="13" r="11.6"/><path d="M18.5,13 L8,13 M12.5,8.3 L7.8,13 L12.5,17.7" stroke-linecap="round" stroke-linejoin="round"/>
  </svg>
  <div class="abs" style="left:82px;top:10px;font-size:23px;line-height:26px;color:#1f1f2b;letter-spacing:1.72px;-webkit-text-stroke:0.45px #1f1f2b;white-space:nowrap">Server Management</div>
  <!-- right icons -->
  <svg class="ico" style="left:724px;top:20px" width="16" height="15" viewBox="0 0 16 15" fill="none" stroke="#75757c" stroke-width="1.6">
    <circle cx="6.3" cy="6.3" r="5.2"/><path d="M10.2,10.2 L14.5,14.3" stroke-linecap="round"/>
  </svg>
  <svg class="ico" style="left:752px;top:20px" width="17" height="15" viewBox="0 0 17 15" fill="none" stroke="#75757c" stroke-width="1.3" stroke-linejoin="round">
    <path d="M8.5,1 L10.6,5.4 L15.5,5.8 L11.8,9 L12.9,13.8 L8.5,11.3 L4.1,13.8 L5.2,9 L1.5,5.8 L6.4,5.4 Z"/>
  </svg>
  <svg class="ico" style="left:778px;top:17px" width="22" height="20" viewBox="0 0 22 20" fill="none" stroke="#7a7a82" stroke-width="1">
    <circle cx="4.8" cy="5.2" r="3.6" fill="#85858c" stroke="none"/><path d="M1.4,5.2 L8.2,5.2 M4.8,1.8 Q3,5.2 4.8,8.6 M4.8,1.8 Q6.6,5.2 4.8,8.6" stroke="#fff" stroke-width="0.5"/>
    <circle cx="12.3" cy="4.4" r="2.9" fill="#fff"/>
    <path d="M7.6,12.2 Q8,8.6 12.3,8.6 Q16.6,8.6 17,12.2"/><path d="M10.8,8.8 L12.3,11 L13.8,8.8"/>
    <rect x="5.5" y="12.2" width="13.6" height="6.6"/><path d="M12.3,14.6 L13.2,15.5 L12.3,16.4 L11.4,15.5 Z" fill="#7a7a82" stroke="none"/>
  </svg>
  <svg class="ico" style="left:810px;top:20px" width="16" height="16" viewBox="0 0 16 16">
    <path d="M5.99,2.77 L6.14,1.05 L9.86,1.05 L10.01,2.77 L11.52,3.65 L13.09,2.91 L14.95,6.14 L13.53,7.12 L13.53,8.88 L14.95,9.86 L13.09,13.09 L11.52,12.35 L10.01,13.23 L9.86,14.95 L6.14,14.95 L5.99,13.23 L4.48,12.35 L2.91,13.09 L1.05,9.86 L2.47,8.88 L2.47,7.12 L1.05,6.14 L2.91,2.91 L4.48,3.65 Z" fill="#8b8b92" stroke="#8b8b92" stroke-width="1" stroke-linejoin="round"/>
    <circle cx="8" cy="8" r="3" fill="#fff"/><circle cx="8" cy="8" r="1.6" fill="#8b8b92"/>
  </svg>
  <svg class="ico" style="left:841px;top:20px" width="16" height="16" viewBox="0 0 16 16">
    <circle cx="8" cy="8" r="7.6" fill="#8b8b92"/>
    <path d="M5.6,6.2 Q5.6,3.6 8,3.6 Q10.4,3.6 10.4,5.9 Q10.4,7.3 8.9,8 Q8,8.5 8,9.8" fill="none" stroke="#fff" stroke-width="1.45"/>
    <circle cx="8" cy="12.1" r="0.95" fill="#fff"/>
  </svg>
  <svg class="ico" style="left:871px;top:19.5px" width="14" height="16" viewBox="0 0 14 16">
    <path d="M7,0.6 Q7.9,0.6 8,1.6 Q11.6,2.6 11.6,7 L11.6,11.2 L13.6,13.2 L0.4,13.2 L2.4,11.2 L2.4,7 Q2.4,2.6 6,1.6 Q6.1,0.6 7,0.6 Z" fill="#8b8b92"/>
    <path d="M5.4,14 Q7,15.8 8.6,14 Z" fill="#8b8b92"/>
  </svg>
  <div class="abs" style="left:898px;top:16px;width:1.3px;height:21px;background:#6c6c74"></div>
  <div class="abs" style="left:914px;top:13.5px;width:26px;height:26px;border-radius:50%;background:#e0e0e4;color:#3a3a44;font-size:11px;line-height:26px;text-align:center;letter-spacing:-0.2px">TT</div>
  <div class="abs" style="left:947px;top:20px;font-size:11px;line-height:14px;color:#6a6a72;-webkit-text-stroke:0.25px #6a6a72;white-space:nowrap">Test Test</div>
  <svg class="ico" style="left:995.5px;top:24px" width="9" height="6" viewBox="0 0 9 6"><path d="M0.3,0.3 L8.7,0.3 L4.5,5 Z" fill="#6a6a72"/></svg>
</div>
<div id="tabs">
  <div class="tab" style="left:40px">Server Dashboard</div>
  <div class="tab" style="left:163.5px">Overview</div>
  <div class="tab" style="left:240.5px">Network</div>
  <div class="tab" style="left:311.5px">Mitre</div>
  <div class="abs" style="left:352px;top:0;width:95px;height:44px;background:#eff0f2"></div>
  <div class="abs" style="left:352px;top:41px;width:95px;height:4px;border-radius:3px 3px 0 0;background:#06062c"></div>
  <div class="tab" style="left:365px;font-weight:bold;letter-spacing:-0.2px;color:#111">Vulnerability</div>
  <div class="tab" style="left:460px">Services</div>
  <div class="tab" style="left:533px">Processes</div>
  <div class="tab" style="left:614px">Configuration</div>
  <div class="tab" style="left:713px">Device Summary</div>
  <div class="tab" style="left:830px">Device Events</div>
  <div class="tab" style="left:932px">Log Explorer</div>
</div>
<!-- collapse button -->
<div class="abs" style="left:172px;top:63px;width:32px;height:32px;border-radius:50%;background:#fff;box-shadow:0 1px 3px rgba(0,0,0,0.18)"></div>
<svg class="ico" style="left:180px;top:71px" width="17" height="16" viewBox="0 0 17 16" fill="none" stroke="#1a1a22" stroke-width="1.5" stroke-linecap="round">
  <path d="M8,1.5 L1.5,8 L8,14.5 M15,1.5 L8.5,8 L15,14.5"/>
</svg>

<!-- FOOTER -->
<div id="foot">
  <svg class="ico" style="left:37.5px;top:12px" width="13" height="13" viewBox="0 0 13 13">
    <circle cx="6.5" cy="6.5" r="6.2" fill="#8c8ea0"/>
    <path d="M7.4,13 L7.4,8 L9,8 L9.3,6.2 L7.4,6.2 L7.4,5.1 Q7.4,4.3 8.2,4.3 L9.4,4.3 L9.4,2.7 Q8.6,2.6 7.9,2.6 Q5.6,2.6 5.6,4.9 L5.6,6.2 L4,6.2 L4,8 L5.6,8 L5.6,13 Z" fill="#02022a"/>
  </svg>
  <svg class="ico" style="left:63.5px;top:12.5px" width="12" height="12" viewBox="0 0 12 12" fill="none" stroke="#8c8ea0" stroke-width="1">
    <path d="M0.8,0.8 L3.8,0.8 L11.2,11.2 L8.2,11.2 Z"/><path d="M11,0.8 L6.9,5.4 M1,11.2 L5.1,6.6" stroke-width="1.2"/>
  </svg>
  <svg class="ico" style="left:88.5px;top:12px" width="13" height="13" viewBox="0 0 13 13">
    <rect x="0" y="0" width="13" height="13" rx="1" fill="#8c8ea0"/>
    <rect x="2" y="5" width="2" height="6" fill="#02022a"/><circle cx="3" cy="3" r="1.15" fill="#02022a"/>
    <path d="M5.5,5 L7.4,5 L7.4,5.9 Q8,4.8 9.3,4.8 Q11,4.8 11,7 L11,11 L9.1,11 L9.1,7.6 Q9.1,6.5 8.3,6.5 Q7.4,6.5 7.4,7.6 L7.4,11 L5.5,11 Z" fill="#02022a"/>
  </svg>
  <div class="abs" style="left:140px;top:11px;font-size:11.5px;line-height:14px;font-weight:bold;color:#fff;white-space:nowrap">Seqops © 2025. All rights reserved.</div>
  <!-- small logo -->
  <svg class="ico" style="left:1132px;top:12px" width="13" height="12" viewBox="0 0 13 12">
    <path d="M10.5,2.2 Q8,0.3 5,1 Q1.5,2 1.6,4.6 L8.8,8.2 Q7.5,10 4.5,9.6 L2.2,8.8" fill="none" stroke="#6fbaf0" stroke-width="2.4"/>
    <path d="M1.2,7.6 Q3,11.2 7.2,11 Q11.5,10.5 11.6,7.5 L4.8,3.9 Q6,2 9,2.6 L11,3.6" fill="none" stroke="#8ccaf5" stroke-width="2.2"/>
  </svg>
  <div class="abs" style="left:1146.4px;top:13.5px;font-size:10px;line-height:12px;color:#e2e2ea;white-space:nowrap;-webkit-text-stroke:0.15px #e2e2ea">SEQOPS</div>
</div>

</body></html>
